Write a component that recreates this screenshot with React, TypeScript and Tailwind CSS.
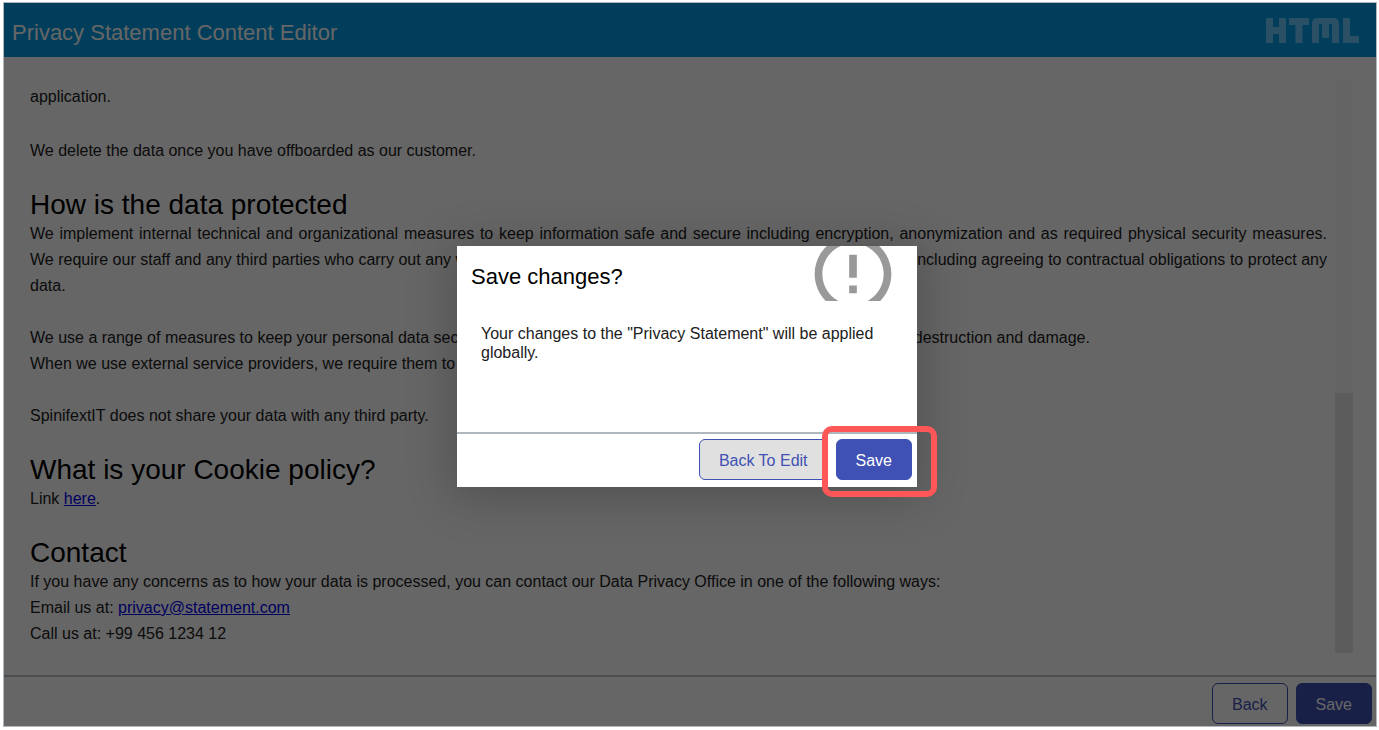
import React from 'react';
import clsx from 'clsx';

interface ActionButtonProps {
  variant: 'outline' | 'tonal' | 'solid';
  children: React.ReactNode;
}

const ActionButton = ({ variant, children }: ActionButtonProps) => (
  <button
    type="button"
    className={clsx(
      'h-[41px] rounded-[6px] border border-[#3f51b5] px-[19px] pt-0.5 text-base whitespace-nowrap',
      variant === 'outline' && 'bg-white text-[#3f51b5]',
      variant === 'tonal' && 'bg-[#e0e0e0] text-[#3f51b5]',
      variant === 'solid' && 'bg-[#3f51b5] text-white',
    )}
  >
    {children}
  </button>
);

const HtmlLogo = () => (
  <svg width="93" height="25" viewBox="0 0 93 25" fill="#6bc8fc" role="img" aria-label="HTML">
    <path d="M0 0h7v9h6V0h7v25h-7v-9H7v9H0z" />
    <path d="M23 0h20v7h-6.500v18h-7V7H23z" />
    <path d="M46 25V5a5 5 0 0 1 5-5h17a5 5 0 0 1 5 5v20h-7V6h-3v14h-7V6h-3v19z" />
    <path d="M77 0h7v18h9v7H77z" />
  </svg>
);

const AlertIcon = () => (
  <svg className="shrink-0" width="92" height="92" viewBox="0 0 24 24" fill="#999999" aria-hidden="true">
    <path d="M11 15h2v2h-2zm0-8h2v6h-2zm.99-5C6.47 2 2 6.48 2 12s4.47 10 9.99 10C17.52 22 22 17.52 22 12S17.52 2 11.99 2zM12 20c-4.42 0-8-3.58-8-8s3.58-8 8-8 8 3.58 8 8-3.58 8-8 8z" />
  </svg>
);

const SectionTitle = ({ children }: { children: React.ReactNode }) => (
  <h2 className="mt-6 text-[28px] leading-[33px] text-black">{children}</h2>
);

const Statement = () => (
  <article className="min-w-0 flex-1 pt-1 text-base leading-[26px] text-[#212121]">
    <p>application.</p>
    <p className="mt-7">We delete the data once you have offboarded as our customer.</p>

    <SectionTitle>How is the data protected</SectionTitle>
    <p className="text-justify">
      We implement internal technical and organizational measures to keep information safe and secure including
      encryption, anonymization and as required physical security measures. We require our staff and any third parties
      who carry out any work on our behalf to comply with our strong security standards, including agreeing to
      contractual obligations to protect any data.
    </p>
    <p className="mt-[26px]">
      We use a range of measures to keep your personal data secure and protected from unauthorized access, use, change,
      loss, destruction and damage.
      <br />
      When we use external service providers, we require them to do the same.
    </p>
    <p className="mt-[26px]">SpinifextIT does not share your data with any third party.</p>

    <SectionTitle>What is your Cookie policy?</SectionTitle>
    <p>
      Link <a href="#cookies" className="text-[#0000ee] underline">here</a>.
    </p>

    <SectionTitle>Contact</SectionTitle>
    <p>
      If you have any concerns as to how your data is processed, you can contact our Data Privacy Office in one of the
      following ways:
    </p>
    <p>
      Email us at:{' '}
      <a href="mailto:privacy@statement.com" className="text-[#0000ee] underline">privacy@statement.com</a>
    </p>
    <p>Call us at: +99 456 1234 12</p>
  </article>
);

const SaveDialog = () => (
  <div
    role="dialog"
    aria-modal="true"
    aria-labelledby="save-title"
    className="flex w-[460px] flex-col bg-white shadow-[0_6px_44px_6px_rgba(0,0,0,0.2)]"
  >
    <div className="flex h-[55px] items-center justify-between overflow-hidden pr-[18px] pl-[14px]">
      <h2 id="save-title" className="pt-1.5 text-[22px] leading-7 text-black">Save changes?</h2>
      <AlertIcon />
    </div>
    <p className="min-h-[131px] px-6 pt-[23px] text-base leading-[19px] text-[#212121]">
      Your changes to the "Privacy Statement" will be applied globally.
    </p>
    <div className="flex justify-end gap-2 border-t-2 border-[#b0b8be] pt-[5px] pr-[5px] pb-[7px]">
      <ActionButton variant="tonal">Back To Edit</ActionButton>
      <div className="relative">
        <ActionButton variant="solid">Save</ActionButton>
        <div className="pointer-events-none absolute -top-[13px] -right-[25px] -bottom-[17px] -left-[14px] rounded-[10px] border-[6px] border-[#ff5757]" />
      </div>
    </div>
  </div>
);

export default function App() {
  return (
    <div className="flex min-h-screen flex-col bg-white pt-[2px] pr-[2px] pb-[3px] pl-[3px] font-['Liberation_Sans',Arial,sans-serif]">
      <div className="relative flex flex-1 flex-col border border-[#b0b8be]">
        <header className="flex h-[54px] items-center justify-between bg-[#009be6] pr-[17px] pl-2">
          <h1 className="pt-1.5 text-[22px] leading-7 text-white">Privacy Statement Content Editor</h1>
          <HtmlLogo />
        </header>

        <main className="flex flex-1 gap-2 pt-[23px] pr-[23px] pb-[22px] pl-[26px]">
          <Statement />
          <div className="flex w-[18px] flex-col justify-end bg-[#f9f9f9]" aria-hidden="true">
            <div className="h-[260px] bg-[#e6e6e6]" />
          </div>
        </main>

        <footer className="flex justify-end gap-2 border-t-2 border-[#bdc3c7] pt-[6px] pr-1 pb-[2px]">
          <ActionButton variant="outline">Back</ActionButton>
          <ActionButton variant="solid">Save</ActionButton>
        </footer>

        <div className="absolute inset-0 grid place-items-center bg-black/60 pt-1 pr-1.5">
          <SaveDialog />
        </div>
      </div>
    </div>
  );
}
